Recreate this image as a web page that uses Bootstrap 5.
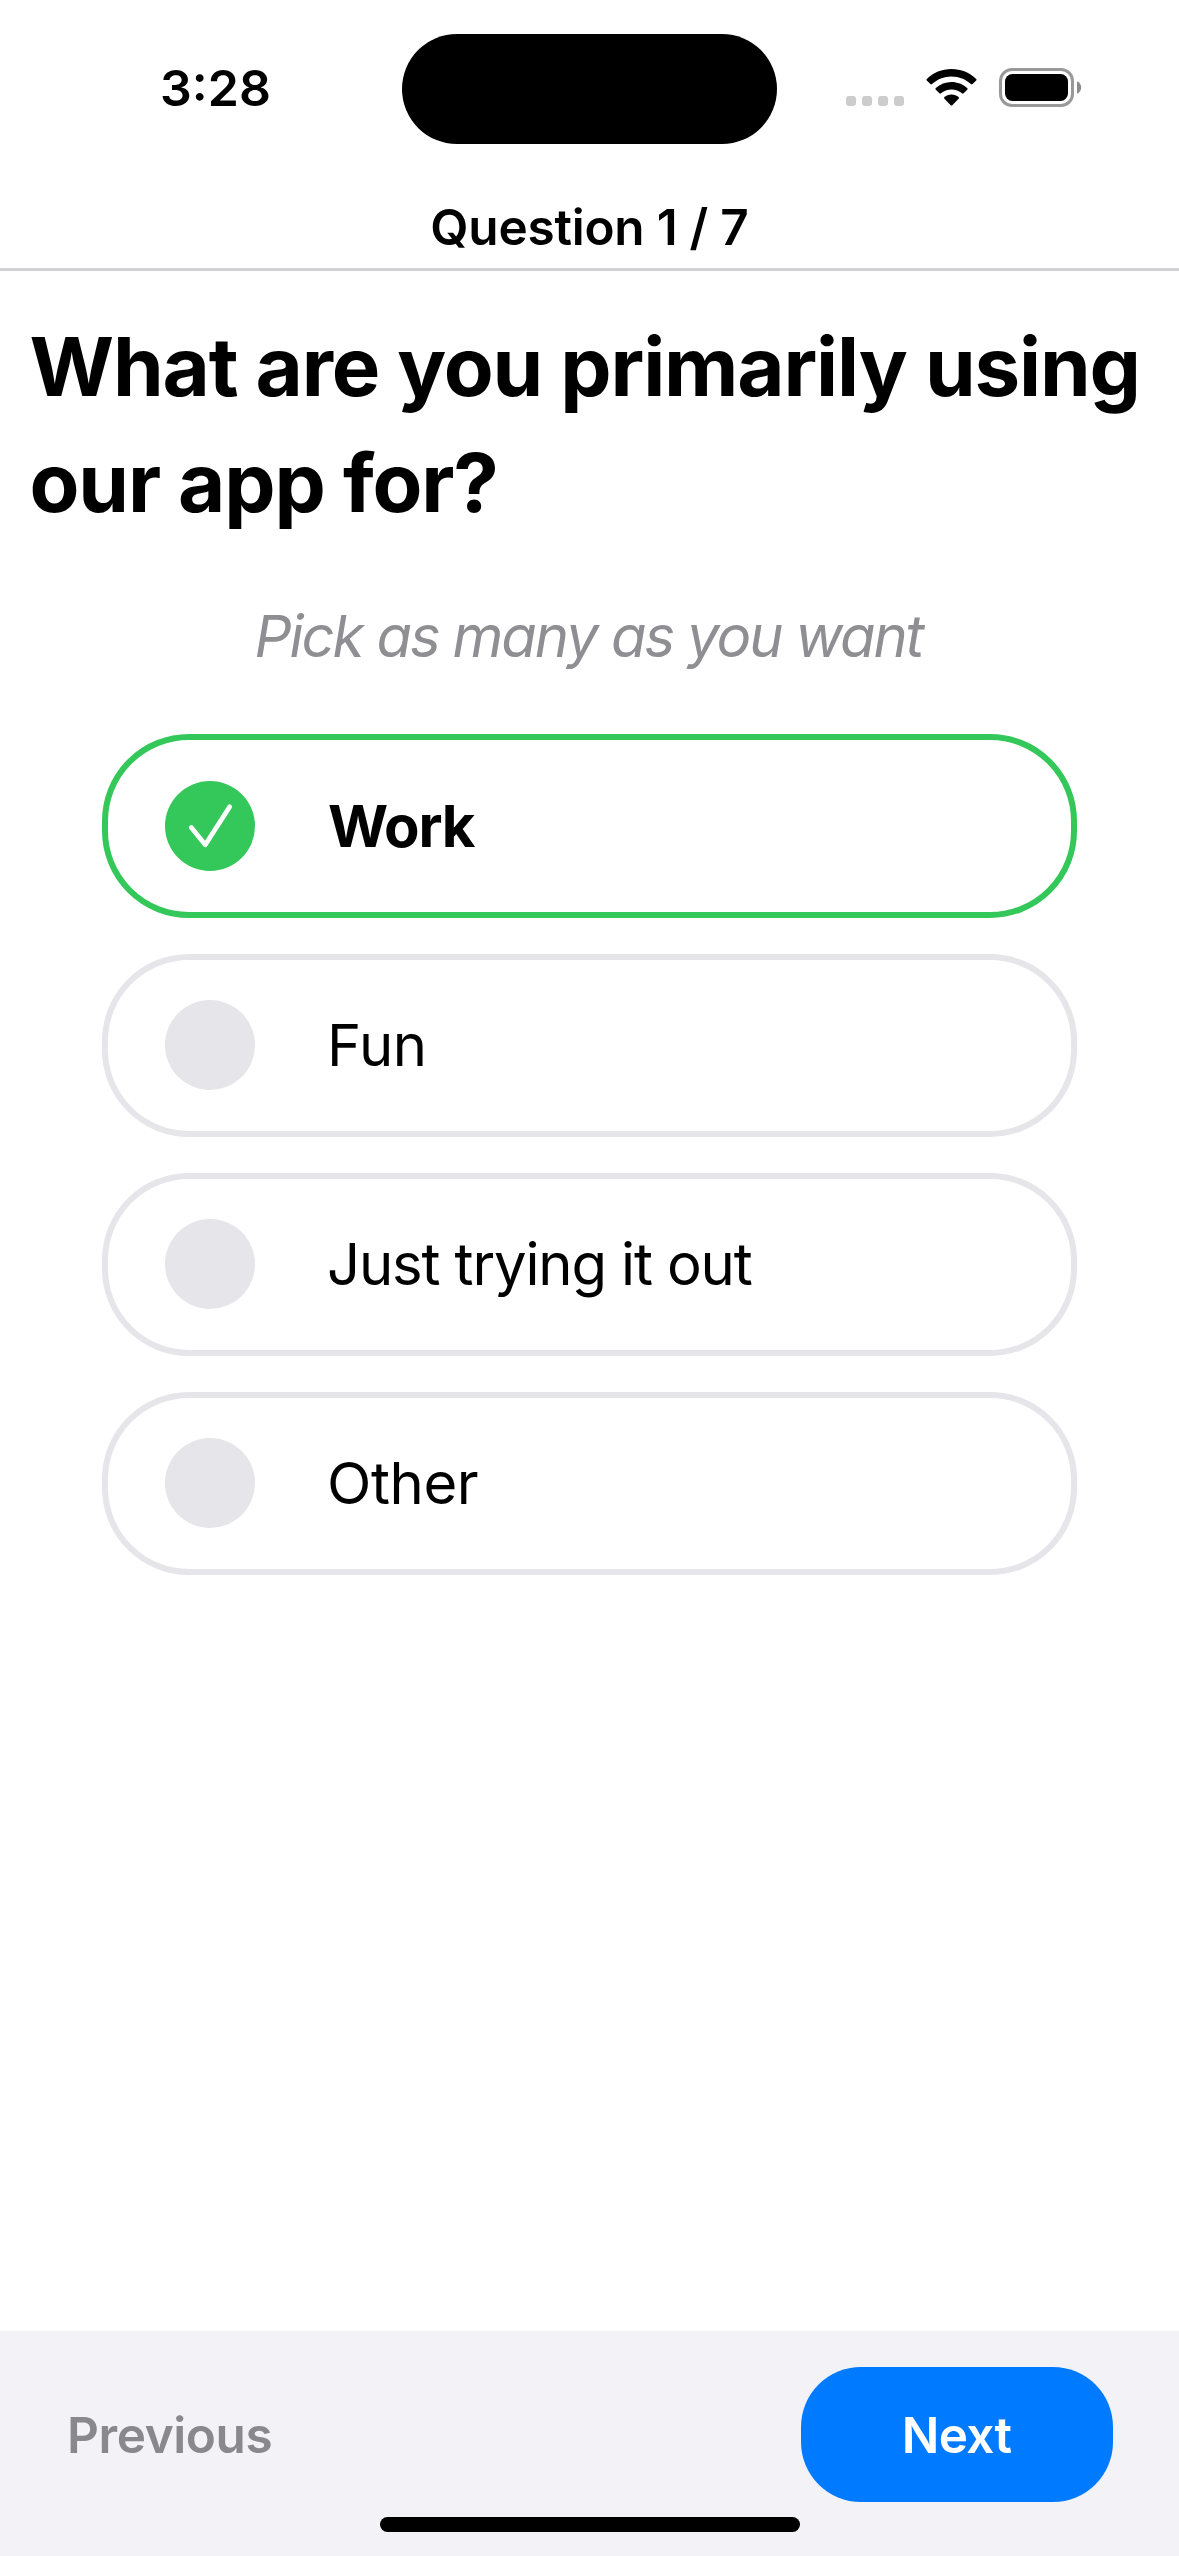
<!DOCTYPE html>
<html lang="en">
<head>
<meta charset="utf-8">
<meta name="viewport" content="width=device-width, initial-scale=1">
<title>Question 1 / 7</title>
<link href="https://cdn.jsdelivr.net/npm/bootstrap@5.3.0/dist/css/bootstrap.min.css" rel="stylesheet">
<style>
  body { font-family: Inter, "Liberation Sans", sans-serif; color: #000; background: #fff; }
  .screen { height: 2556px; width: 1179px; overflow: hidden; }
  .status-bar { height: 177px; }
  .status-time { width: 402px; padding: 58px 0 0 160px; font-size: 50px; line-height: 60px; font-weight: 600; }
  .island { width: 375px; height: 110px; margin-top: 34px; border-radius: 56px; background: #000; }
  .status-icons { padding: 68px 0 0 69px; }
  .title-bar { height: 94px; padding-top: 23px; border-bottom: 3px solid #d1d1d6; font-size: 49.5px; line-height: 54px; font-weight: 600; letter-spacing: -.23px; }
  .prompt { padding: 38px 0 0 29.5px; font-size: 81.5px; line-height: 116px; letter-spacing: -1.15px; white-space: nowrap; }
  .hint { margin-top: 59px; padding-right: 2px; font-size: 58px; line-height: 72px; letter-spacing: -2.1px; color: #8e8e93; }
  .choices { width: 975px; margin: 62px auto 0; gap: 36px; }
  .choice { height: 183px; padding: 0 57px 1px; gap: 72px; border: 6px solid #e5e5ea; border-radius: 87px; background: #fff; font-size: 58px; line-height: 72px; letter-spacing: -1.15px; color: #000; }
  .choice.selected { height: 184px; padding-bottom: 0; gap: 73px; border-color: #34c759; font-weight: 700; letter-spacing: -1.2px; }
  .dot { width: 90px; height: 90px; background: #e5e5ea; }
  .selected .dot { background: #34c759; }
  .short { letter-spacing: -.4px; }
  .footer-bar { height: 225px; padding: 36px 66px 0 67px; background: #f2f2f7; }
  .footer-bar .btn { --bs-btn-padding-x: 0; --bs-btn-padding-y: 0; --bs-btn-border-width: 0; height: 135px; font-size: 49.5px; line-height: 60px; font-weight: 600; letter-spacing: -.4px; }
  .btn-prev, .btn-prev:hover { color: #88888d; }
  .footer-bar .btn-next { --bs-btn-bg: #007aff; width: 312px; padding-right: 1px; border-radius: 60px; letter-spacing: -.7px; }
  .home-indicator { left: 380px; bottom: 24px; width: 420px; height: 15px; background: #000; }
</style>
</head>
<body>
<div class="screen d-flex flex-column position-relative">
  <header>
    <div class="status-bar d-flex align-items-start">
      <div class="status-time">3:28</div>
      <div class="island"></div>
      <div class="status-icons">
        <svg class="d-block" width="237" height="40" viewBox="846 68 237 40" aria-hidden="true">
          <g fill="#ccc">
            <rect x="846" y="96" width="10" height="10" rx="3"/><rect x="862" y="96" width="10" height="10" rx="3"/>
            <rect x="878" y="96" width="10" height="10" rx="3"/><rect x="894" y="96" width="10" height="10" rx="3"/>
          </g>
          <path d="M951.5 69c9.500 0 18.300 3.700 24.700 9.900.5.500.5 1.200 0 1.700l-3.600 3.500c-.5.500-1.100.500-1.600 0-5.200-4.900-12-7.700-19.500-7.700s-14.300 2.800-19.500 7.700c-.5.500-1.100.500-1.600 0l-3.600-3.500c-.5-.5-.5-1.200 0-1.700 6.400-6.200 15.200-9.900 24.700-9.900z"/>
          <path d="M951.500 82c6 0 11.500 2.300 15.700 6.100.5.500.5 1.200 0 1.700l-3.600 3.500c-.5.500-1.100.5-1.600 0-2.800-2.500-6.500-3.900-10.500-3.900s-7.700 1.400-10.500 3.900c-.5.500-1.100.5-1.600 0l-3.600-3.500c-.5-.5-.5-1.200 0-1.700 4.200-3.800 9.700-6.100 15.700-6.100z"/>
          <path d="M951.500 94.500c2.700 0 5.200.9 7.100 2.500.5.500.5 1.100 0 1.700l-6.300 6.500c-.5.500-1.100.5-1.600 0l-6.300-6.500c-.5-.6-.5-1.200 0-1.700 1.900-1.600 4.400-2.500 7.100-2.500z"/>
          <rect x="1000.500" y="69.500" width="72" height="36" rx="11.500" fill="none" stroke="#999" stroke-width="3"/>
          <rect x="1005" y="74" width="63" height="27" rx="7.500"/>
          <path d="M1077 81.200c2.500 1 4.200 3.400 4.200 6.300s-1.700 5.300-4.200 6.300z" fill="#8c8c8c"/>
        </svg>
      </div>
    </div>
    <div class="title-bar text-center">Question 1 / 7</div>
  </header>

  <main class="flex-grow-1">
    <h1 class="prompt fw-bold mb-0">What are you primarily using<br>our app for?</h1>
    <p class="hint text-center fst-italic mb-0">Pick as many as you want</p>
    <div class="choices d-flex flex-column">
      <button type="button" class="choice selected d-flex align-items-center text-start">
        <span class="dot rounded-circle flex-shrink-0">
          <svg class="d-block" width="90" height="90" viewBox="0 0 90 90" fill="none" stroke="#fff" stroke-width="4.800" stroke-linecap="round" stroke-linejoin="round" aria-hidden="true"><path d="M26.300 46.500 40.300 63.800 64.700 25.800"/></svg>
        </span>
        <span>Work</span>
      </button>
      <button type="button" class="choice d-flex align-items-center text-start"><span class="dot rounded-circle flex-shrink-0"></span><span class="short">Fun</span></button>
      <button type="button" class="choice d-flex align-items-center text-start"><span class="dot rounded-circle flex-shrink-0"></span><span>Just trying it out</span></button>
      <button type="button" class="choice d-flex align-items-center text-start"><span class="dot rounded-circle flex-shrink-0"></span><span class="short">Other</span></button>
    </div>
  </main>

  <footer class="footer-bar d-flex align-items-start justify-content-between">
    <button type="button" class="btn btn-prev">Previous</button>
    <button type="button" class="btn btn-primary btn-next">Next</button>
  </footer>
  <div class="home-indicator position-absolute rounded-pill"></div>
</div>
<script src="https://cdn.jsdelivr.net/npm/bootstrap@5.3.0/dist/js/bootstrap.bundle.min.js"></script>
</body>
</html>
